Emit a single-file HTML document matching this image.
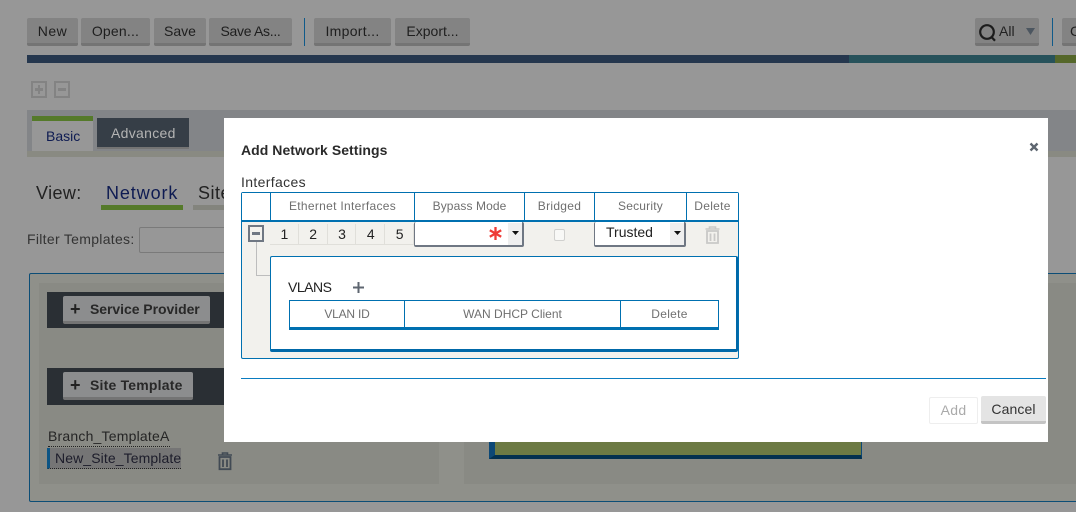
<!DOCTYPE html>
<html><head><meta charset="utf-8"><style>
html,body{margin:0;padding:0}
body{width:1076px;height:512px;overflow:hidden;position:relative;background:#979797;font-family:"Liberation Sans",sans-serif;font-size:14px;color:#222}
.a,.b,.t,.c{position:absolute;box-sizing:border-box}
.t{white-space:nowrap;line-height:18px}
.b{background:#838383;border-bottom:3px solid #747474;border-radius:2px;text-align:center;line-height:26px;color:#1e1e1e;letter-spacing:.2px;height:28px;top:18px}
.c{text-align:center;white-space:nowrap;color:#6f6f6f;font-size:12px;letter-spacing:.3px;line-height:18px}
.n{position:absolute;top:224px;height:21px;line-height:20px;text-align:center;width:28.8px;font-size:14px;color:#222;background:#f2f1ed;border-right:1px solid #e0dfda;border-bottom:1px solid #e0dfda;box-sizing:border-box;padding-left:1px}
svg{position:absolute;overflow:visible}
</style></head><body>
<div class="b" style="left:27px;width:51px;letter-spacing:.5px">New</div>
<div class="b" style="left:81px;width:69px">Open...</div>
<div class="b" style="left:154px;width:52px;letter-spacing:0">Save</div>
<div class="b" style="left:209px;width:83px;letter-spacing:-.3px">Save As...</div>
<div class="a" style="left:304px;top:18px;width:1px;height:28px;background:#0f5a8a"></div>
<div class="b" style="left:314px;width:77px;letter-spacing:.3px">Import...</div>
<div class="b" style="left:395px;width:75px;letter-spacing:0">Export...</div>
<div class="b" style="left:975px;width:64px"></div>
<svg style="left:979px;top:24px" width="20" height="20"><circle cx="8" cy="8" r="6.800" fill="none" stroke="#1c1c1c" stroke-width="2.200"/><path d="M12.500 13l3.500 3.800" stroke="#1c1c1c" stroke-width="2.200"/></svg>
<div class="t" style="left:999px;top:22px;color:#222">All</div>
<svg style="left:1026px;top:28px" width="10" height="8"><path d="M0 0h9L4.500 7z" fill="#4c5660"/></svg>
<div class="a" style="left:1052px;top:18px;width:1px;height:28px;background:#0f5a8a"></div>
<div class="b" style="left:1062px;width:30px;text-align:left;padding-left:8px">C</div>
<div class="a" style="left:27px;top:55px;width:822px;height:8px;background:#25374e"></div>
<div class="a" style="left:849px;top:55px;width:206px;height:8px;background:#27525b"></div>
<div class="a" style="left:1055px;top:55px;width:21px;height:8px;background:#55672a"></div>

<div class="a" style="left:31px;top:81px;width:16px;height:17px;border:2px solid #838383"></div>
<div class="a" style="left:35px;top:88px;width:8px;height:3px;background:#838383"></div>
<div class="a" style="left:38px;top:85px;width:2px;height:9px;background:#838383"></div>
<div class="a" style="left:54px;top:81px;width:16px;height:17px;border:2px solid #838383"></div>
<div class="a" style="left:58px;top:88px;width:8px;height:3px;background:#838383"></div>

<div class="a" style="left:27px;top:110px;width:1049px;height:41px;background:#838588"></div>
<div class="a" style="left:27px;top:151px;width:1049px;height:6px;background:#898a82"></div>
<div class="a" style="left:32px;top:116px;width:61px;height:35px;background:#979797;border-top:5px solid #557a2a"></div>
<div class="t" style="left:46px;top:127px;color:#0e1b52">Basic</div>
<div class="a" style="left:97px;top:118px;width:92px;height:31px;background:#363e47;border-bottom:2px solid #747474"></div>
<div class="t" style="left:111px;top:124px;color:#b4b4b4;letter-spacing:.3px">Advanced</div>

<div class="t" style="left:36px;top:184px;font-size:18px;color:#222;letter-spacing:.4px">View:</div>
<div class="t" style="left:106px;top:184px;font-size:18px;color:#0e1b52;letter-spacing:.9px">Network</div>
<div class="a" style="left:101px;top:205px;width:82px;height:5px;background:#557a2a"></div>
<div class="t" style="left:198px;top:184px;font-size:18px;color:#222;letter-spacing:.5px">Site</div>
<div class="a" style="left:193px;top:205px;width:31px;height:5px;background:#83847d"></div>
<div class="t" style="left:27px;top:230px;color:#333;letter-spacing:.3px">Filter Templates:</div>
<div class="a" style="left:139px;top:227px;width:90px;height:26px;border:1px solid #7a7a7a;border-radius:2px;background:#979797"></div>

<div class="a" style="left:29px;top:273px;width:1060px;height:229px;background:#8f908a;border:1px solid #0c4d76;border-radius:2px"></div>
<div class="a" style="left:39px;top:283px;width:400px;height:201px;background:#898a84"></div>
<div class="a" style="left:464px;top:283px;width:620px;height:201px;background:#898a84"></div>
<div class="a" style="left:47px;top:292px;width:180px;height:36px;background:#2a2f34"></div>
<div class="a" style="left:63px;top:296px;width:147px;height:28px;background:#8c8d8e;border-bottom:3px solid #747474;border-radius:2px"></div>
<div class="t" style="left:70px;top:300px;font-size:18px;font-weight:bold;color:#222">+</div>
<div class="t" style="left:90px;top:300px;font-weight:bold;color:#282828;letter-spacing:-.05px">Service Provider</div>
<div class="a" style="left:47px;top:368px;width:180px;height:37px;background:#2a2f34"></div>
<div class="a" style="left:63px;top:372px;width:130px;height:28px;background:#8c8d8e;border-bottom:3px solid #747474;border-radius:2px"></div>
<div class="t" style="left:70px;top:376px;font-size:18px;font-weight:bold;color:#222">+</div>
<div class="t" style="left:90px;top:376px;font-weight:bold;color:#282828;letter-spacing:.2px">Site Template</div>
<div class="t" style="left:48px;top:427px;color:#252525;letter-spacing:.2px;width:122px;height:20px;border-bottom:1px dotted #222">Branch_TemplateA</div>
<div class="a" style="left:47px;top:448px;width:134px;height:21px;background:#757575;border-left:3px solid #0c5484;border-bottom:1px dotted #222"></div>
<div class="t" style="left:55px;top:449px;color:#1c1c2a;letter-spacing:.1px">New_Site_Template</div>
<svg style="left:217px;top:452px" width="16" height="18"><path d="M1 3h14M5.500 3V1h5v2" fill="none" stroke="#414a54" stroke-width="1.600"/><path d="M2.500 5h11v12.200h-11zM6 7.500v7.500M10 7.500v7.500" fill="none" stroke="#414a54" stroke-width="1.800"/></svg>

<div class="a" style="left:489px;top:442px;width:373px;height:17px;background:#6c7a44;border-left:6px solid #0c4876;border-right:1px solid #0c4876;border-bottom:4px solid #02304f"></div>

<!-- dialog -->
<div class="a" style="left:224px;top:118px;width:824px;height:324px;background:#fff"></div>
<div class="t" style="left:241px;top:141px;font-weight:bold;color:#2a2a2a;letter-spacing:.05px">Add Network Settings</div>
<svg style="left:1030px;top:143px" width="8" height="8"><path d="M.5.500l7 7M7.500.500l-7 7" stroke="#5e6670" stroke-width="2.400"/></svg>
<div class="t" style="left:241px;top:173px;color:#333;letter-spacing:.35px">Interfaces</div>

<div class="a" style="left:241px;top:192px;width:498px;height:167px;background:#f2f1ed;border:1px solid #0070b0;border-radius:2px"></div>
<div class="a" style="left:242px;top:193px;width:496px;height:27px;background:#fff"></div>
<div class="a" style="left:242px;top:220px;width:496px;height:2px;background:#0070b0"></div>
<div class="a" style="left:270px;top:193px;width:1px;height:27px;background:#0070b0"></div>
<div class="a" style="left:414px;top:193px;width:1px;height:27px;background:#0070b0"></div>
<div class="a" style="left:524px;top:193px;width:1px;height:27px;background:#0070b0"></div>
<div class="a" style="left:594px;top:193px;width:1px;height:27px;background:#0070b0"></div>
<div class="a" style="left:686px;top:193px;width:1px;height:27px;background:#0070b0"></div>
<div class="c" style="left:271px;top:197px;width:143px">Ethernet Interfaces</div>
<div class="c" style="left:415px;top:197px;width:109px;letter-spacing:.1px">Bypass Mode</div>
<div class="c" style="left:525px;top:197px;width:69px">Bridged</div>
<div class="c" style="left:595px;top:197px;width:91px;letter-spacing:.2px">Security</div>
<div class="c" style="left:687px;top:197px;width:51px">Delete</div>

<div class="a" style="left:248px;top:225px;width:16px;height:17px;border:2px solid #6f7783;background:#f2f1ed"></div>
<div class="a" style="left:252px;top:232px;width:8px;height:3px;background:#6f7783"></div>
<div class="a" style="left:256px;top:242px;width:1px;height:33px;background:#bdbdbd"></div>
<div class="a" style="left:256px;top:275px;width:15px;height:1px;background:#bdbdbd"></div>

<div class="n" style="left:270px">1</div>
<div class="n" style="left:298.800px">2</div>
<div class="n" style="left:327.600px">3</div>
<div class="n" style="left:356.400px">4</div>
<div class="n" style="left:385.200px">5</div>

<div class="a" style="left:414px;top:222px;width:110px;height:25px;background:#fff;border:1px solid #6f7783;border-top:0;border-right:2px solid #6f7783;border-bottom:2px solid #6f7783;border-radius:2px"></div>
<div class="a" style="left:508px;top:223px;width:14px;height:22px;background:#efefef"></div>
<svg style="left:489px;top:227px" width="14" height="14"><path d="M6.500 0v13M.8 3.300l11.400 6.400M12.200 3.300L.8 9.700" stroke="#ee3b36" stroke-width="2.300"/></svg>
<svg style="left:512px;top:231px" width="7" height="4"><path d="M0 0h7L3.500 4z" fill="#111"/></svg>
<div class="a" style="left:554px;top:229px;width:11px;height:12px;background:#f8f8f6;border:1px solid #d0d0ce;border-radius:2px"></div>
<div class="a" style="left:594px;top:222px;width:92px;height:25px;background:#fff;border:1px solid #6f7783;border-top:0;border-right:2px solid #6f7783;border-bottom:2px solid #6f7783;border-radius:2px"></div>
<div class="a" style="left:670px;top:223px;width:14px;height:22px;background:#efefef"></div>
<svg style="left:674px;top:231px" width="7" height="4"><path d="M0 0h7L3.500 4z" fill="#111"/></svg>
<div class="t" style="left:606px;top:223px;color:#222">Trusted</div>
<svg style="left:705px;top:226px" width="15" height="18"><path d="M.5 3h14M4.500 3V1h6v2" fill="none" stroke="#c9c9c7" stroke-width="1.600"/><path d="M2 5h11v12H2zM5.500 7.500V15M9.500 7.500V15" fill="none" stroke="#c9c9c7" stroke-width="1.800"/></svg>

<div class="a" style="left:270px;top:256px;width:468px;height:96px;background:#fff;border:1px solid #0070b0;border-right:2px solid #0068a8;border-bottom:3px solid #0068a8;border-radius:2px"></div>
<div class="t" style="left:288px;top:278px;color:#222;letter-spacing:-.5px">VLANS</div>
<svg style="left:353px;top:282px" width="11" height="11"><path d="M5.500 0v11M0 5.500h11" stroke="#5e6670" stroke-width="2"/></svg>
<div class="a" style="left:289px;top:300px;width:430px;height:30px;background:#fff;border:1px solid #0070b0;border-bottom:3px solid #0070b0"></div>
<div class="a" style="left:404px;top:300px;width:1px;height:28px;background:#0070b0"></div>
<div class="a" style="left:620px;top:300px;width:1px;height:28px;background:#0070b0"></div>
<div class="c" style="left:290px;top:305px;width:114px;letter-spacing:-.2px">VLAN ID</div>
<div class="c" style="left:405px;top:305px;width:215px;letter-spacing:0">WAN DHCP Client</div>
<div class="c" style="left:621px;top:305px;width:97px">Delete</div>

<div class="a" style="left:241px;top:378px;width:805px;height:1px;background:#0a7cc0"></div>
<div class="a" style="left:929px;top:397px;width:49px;height:27px;border:1px solid #eee;border-radius:2px;background:#fff;text-align:center;line-height:25px;color:#aaa;letter-spacing:.3px">Add</div>
<div class="a" style="left:981px;top:396px;width:65px;height:28px;background:#e4e4e4;border-bottom:3px solid #c4c4c4;border-radius:2px;text-align:center;line-height:26px;color:#333;letter-spacing:.1px">Cancel</div>
</body></html>
